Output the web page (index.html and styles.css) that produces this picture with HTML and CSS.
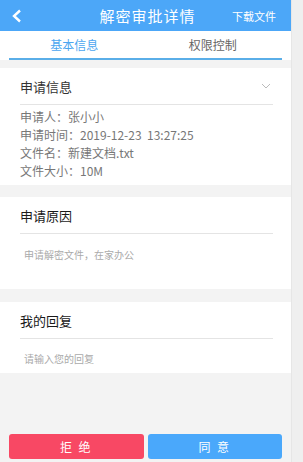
FILE: index.html
```html
<!DOCTYPE html>
<html lang="zh-CN">
<head>
    <meta charset="UTF-8">
    <title>解密审批详情</title>
    <link rel="stylesheet" href="styles.css">
</head>
<body>
    <div class="page">
        <div class="topbar">
            <span class="back">
                <svg width="12" height="14" viewBox="0 0 12 14"><path d="M9 1.5 L3 7 L9 12.5" fill="none" stroke="#fff" stroke-width="2.4"/></svg>
            </span>
            <span class="title">解密审批详情</span>
            <span class="download">下载文件</span>
        </div>

        <div class="tabs">
            <div class="tab-list">
                <span class="tab active">基本信息</span>
                <span class="tab">权限控制</span>
            </div>
        </div>

        <div class="card">
            <div class="card-head">
                <span>申请信息</span>
                <svg class="arrow" width="10" height="6" viewBox="0 0 10 6"><path d="M1 1 L5 5 L9 1" fill="none" stroke="#bbb" stroke-width="1"/></svg>
            </div>
            <div class="info">
                <p>申请人：张小小</p>
                <p>申请时间：2019-12-23&nbsp;&nbsp;13:27:25</p>
                <p>文件名：新建文档.txt</p>
                <p>文件大小：10M</p>
            </div>
        </div>

        <div class="card reason">
            <div class="card-head dark">申请原因</div>
            <p class="note">申请解密文件，在家办公</p>
        </div>

        <div class="card reply">
            <div class="card-head dark">我的回复</div>
            <p class="note">请输入您的回复</p>
        </div>

        <div class="actions">
            <button class="btn reject">拒 绝</button>
            <button class="btn agree">同 意</button>
        </div>
    </div>
</body>
</html>
```

FILE: styles.css
```css
body { margin: 0; background: #efefef; font-family: "Noto Sans CJK SC", "Noto Sans", sans-serif; }
.page { width: 291px; height: 462px; background: #f3f3f3; display: flex; flex-direction: column; border-right: 1px solid #e6e6e6; }
.topbar { height: 31px; background: #4ca7f8; color: white; display: flex; align-items: center; position: relative; }
.back { width: 30px; display: flex; justify-content: center; padding-left: 2px; }
.title { position: absolute; left: 0; right: 0; text-align: center; font-size: 15px; letter-spacing: 1px; padding-left: 4px; pointer-events: none; }
.download { margin-left: auto; margin-right: 15px; font-size: 11px; }
.tabs { background: white; padding: 0 9px; }
.tab-list { height: 27px; display: flex; border-bottom: 2px solid #5aaee8; }
.tab { flex: 1; text-align: center; font-size: 12px; line-height: 27px; color: #666; }
.tab.active { color: #4ba6f0; padding-right: 8px; }
.tab:last-child { padding-right: 4px; }
.card { background: white; margin-top: 8px; padding: 0 18px 0 20px; }
.card-head { height: 36px; display: flex; align-items: center; justify-content: space-between; font-size: 13px; color: #333; border-bottom: 1px solid #e4e4e4; }
.card-head.dark { color: #1a1a1a; }
.arrow { margin-right: 2px; }
.info { padding: 3px 0 5px; }
.info p { margin: 0; font-size: 12px; line-height: 18px; color: #777; }
.reason { margin-top: 12px; height: 92px; }
.reply { margin-top: 13px; height: 71px; }
.note { margin: 0; padding-top: 13px; font-size: 10px; color: #aaa; padding-left: 4px; }
.reply .note { padding-top: 12px; }
.actions { margin-top: auto; display: flex; gap: 4px; padding: 0 9px 3px; }
.btn { flex: 1; height: 25px; border: none; border-radius: 3px; color: white; font-size: 12px; font-family: inherit; letter-spacing: 2px; }
.reject { background: #f84864; }
.agree { background: #4aa8fb; }
```
